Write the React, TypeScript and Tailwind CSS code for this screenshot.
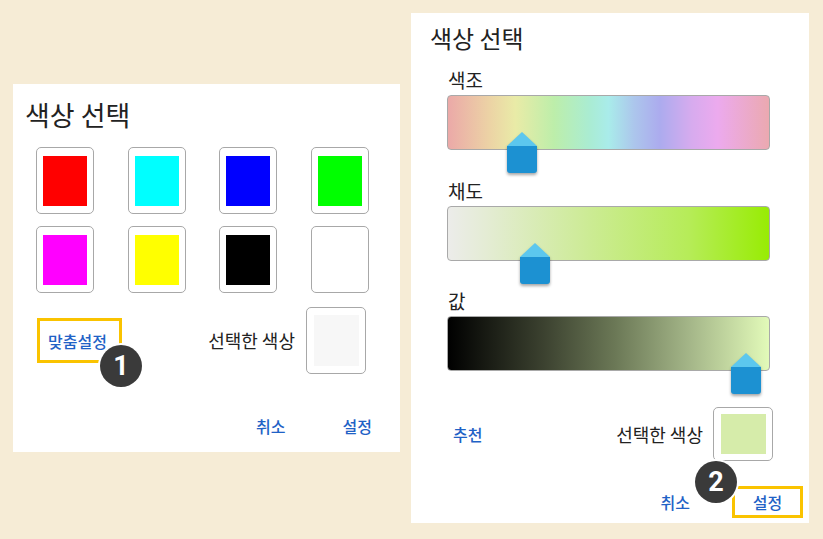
import React from 'react';

const FONT = "font-['Noto_Sans_CJK_KR','Noto_Sans',sans-serif]";

const SWATCHES = ['#ff0000', '#00ffff', '#0000ff', '#00ff00', '#ff00ff', '#ffff00', '#000000', '#ffffff'];

const Badge: React.FC<{ n: string; className: string }> = ({ n, className }) => (
  <div
    className={`absolute w-[42px] h-[42px] rounded-full bg-[#3a3a3a] ring-2 ring-white flex items-center justify-center text-white text-[27px] font-bold leading-none font-['Roboto','Liberation_Sans',sans-serif] ${className}`}
  >
    {n}
  </div>
);

const Thumb: React.FC<{ left: number; top: number }> = ({ left, top }) => (
  <svg
    width="32"
    height="42"
    viewBox="0 0 32 42"
    className="absolute drop-shadow-[0_2px_1.5px_rgba(0,0,0,0.35)]"
    style={{ left, top }}
  >
    <path d="M16 0 L31 14 L1 14 Z" fill="#5cc7ee" />
    <path d="M1 14 H31 V38 Q31 41 28 41 H4 Q1 41 1 38 Z" fill="#1c91d2" />
  </svg>
);

const Bar: React.FC<{ gradient: string; thumbLeft: number }> = ({ gradient, thumbLeft }) => (
  <div className="relative ml-[36px] w-[323px] h-[55px]">
    <div className={`w-full h-full rounded-[4px] border border-[#a9a9a9] ${gradient}`} />
    <Thumb left={thumbLeft} top={37} />
  </div>
);

const Label: React.FC<{ text: string; className?: string }> = ({ text, className = '' }) => (
  <div className={`h-[30px] flex items-center pl-[37px] text-[19px] text-[#222] ${className}`}>{text}</div>
);

const Preview: React.FC<{ color: string; tall?: boolean }> = ({ color, tall }) => (
  <div
    className={`w-[60px] ${tall ? 'h-[67px]' : 'h-[54px]'} rounded-[5px] border-[1.5px] border-[#a8a8a8] bg-white flex items-center justify-center`}
  >
    <div className={`w-[45px] ${tall ? 'h-[51px]' : 'h-[40px]'} ${color}`} />
  </div>
);

const LeftPanel: React.FC = () => (
  <div className="relative mt-[71px] w-[387px] h-[368px] bg-white flex flex-col">
    <div className="h-[63px] flex items-center pl-[12px] text-[27px] text-[#222]">색상 선택</div>
    <div className="ml-[23px] grid grid-cols-[repeat(4,58px)] gap-x-[33.5px] gap-y-[12px]">
      {SWATCHES.map((c) => (
        <div
          key={c}
          className="w-[58px] h-[67px] rounded-[5px] border-[1.5px] border-[#a8a8a8] bg-white flex items-center justify-center"
        >
          <div className="w-[44px] h-[50px]" style={{ backgroundColor: c }} />
        </div>
      ))}
    </div>
    <div className="mt-[14px] h-[67px] flex items-center pr-[34px]">
      <div className="ml-[24px] w-[85px] h-[45px] border-[3px] border-[#fac300] flex items-center pl-[8px] text-[16px] text-[#1f62c6] font-medium">
        맞춤설정
      </div>
      <div className="ml-auto mr-[11px] text-[18px] text-[#222]">선택한 색상</div>
      <Preview color="bg-[#f7f7f7]" tall />
    </div>
    <div className="mt-[36px] h-[32px] flex items-center justify-end pr-[28px] gap-[57px] text-[16px] text-[#1f62c6] font-medium">
      <span>취소</span>
      <span>설정</span>
    </div>
    <Badge n="1" className="left-[87px] top-[261px]" />
  </div>
);

const RightPanel: React.FC = () => (
  <div className="relative w-[398px] h-[510px] bg-white flex flex-col">
    <div className="h-[50px] flex items-center pl-[19px] text-[24px] text-[#222]">색상 선택</div>
    <Label text="색조" className="mt-[2px]" />
    <Bar
      gradient="bg-[linear-gradient(to_right,#eba9a8_0%,#ecd3a5_13%,#e9eba7_21%,#bdeeaa_33%,#aaecd2_44%,#a9ecea_50%,#acc6ec_58%,#acabee_66%,#d7abee_76%,#ecaaee_84%,#eba9b0_100%)]"
      thumbLeft={59}
    />
    <Label text="채도" className="mt-[26px]" />
    <Bar gradient="bg-[linear-gradient(to_right,#ececea_0%,#e4ecd4_12%,#cfeb9c_40%,#b6ec58_75%,#98ec04_100%)]" thumbLeft={72} />
    <Label text="값" className="mt-[25px]" />
    <Bar gradient="bg-[linear-gradient(to_right,#000000_0%,#3c4230_30%,#6b7856_52%,#a6b88a_76%,#e2fab9_100%)]" thumbLeft={283} />
    <div className="mt-[36px] h-[54px] flex items-center pr-[36px]">
      <span className="ml-[42px] text-[16px] text-[#1f62c6] font-medium">추천</span>
      <span className="ml-auto mr-[10px] text-[18px] text-[#222]">선택한 색상</span>
      <Preview color="bg-[#d6ecaa]" />
    </div>
    <div className="mt-[25px] h-[32px] flex items-center justify-end pr-[6px] text-[16px] text-[#1f62c6] font-medium">
      <span>취소</span>
      <div className="ml-[42px] w-[71px] h-[32px] border-[3px] border-[#fac300] flex items-center justify-center">설정</div>
    </div>
    <Badge n="2" className="left-[284px] top-[448px]" />
  </div>
);

export default function App() {
  return (
    <div className={`w-[823px] h-[539px] bg-[#f6ecd6] flex items-start pl-[13px] pt-[13px] gap-[11px] ${FONT}`}>
      <LeftPanel />
      <RightPanel />
    </div>
  );
}
